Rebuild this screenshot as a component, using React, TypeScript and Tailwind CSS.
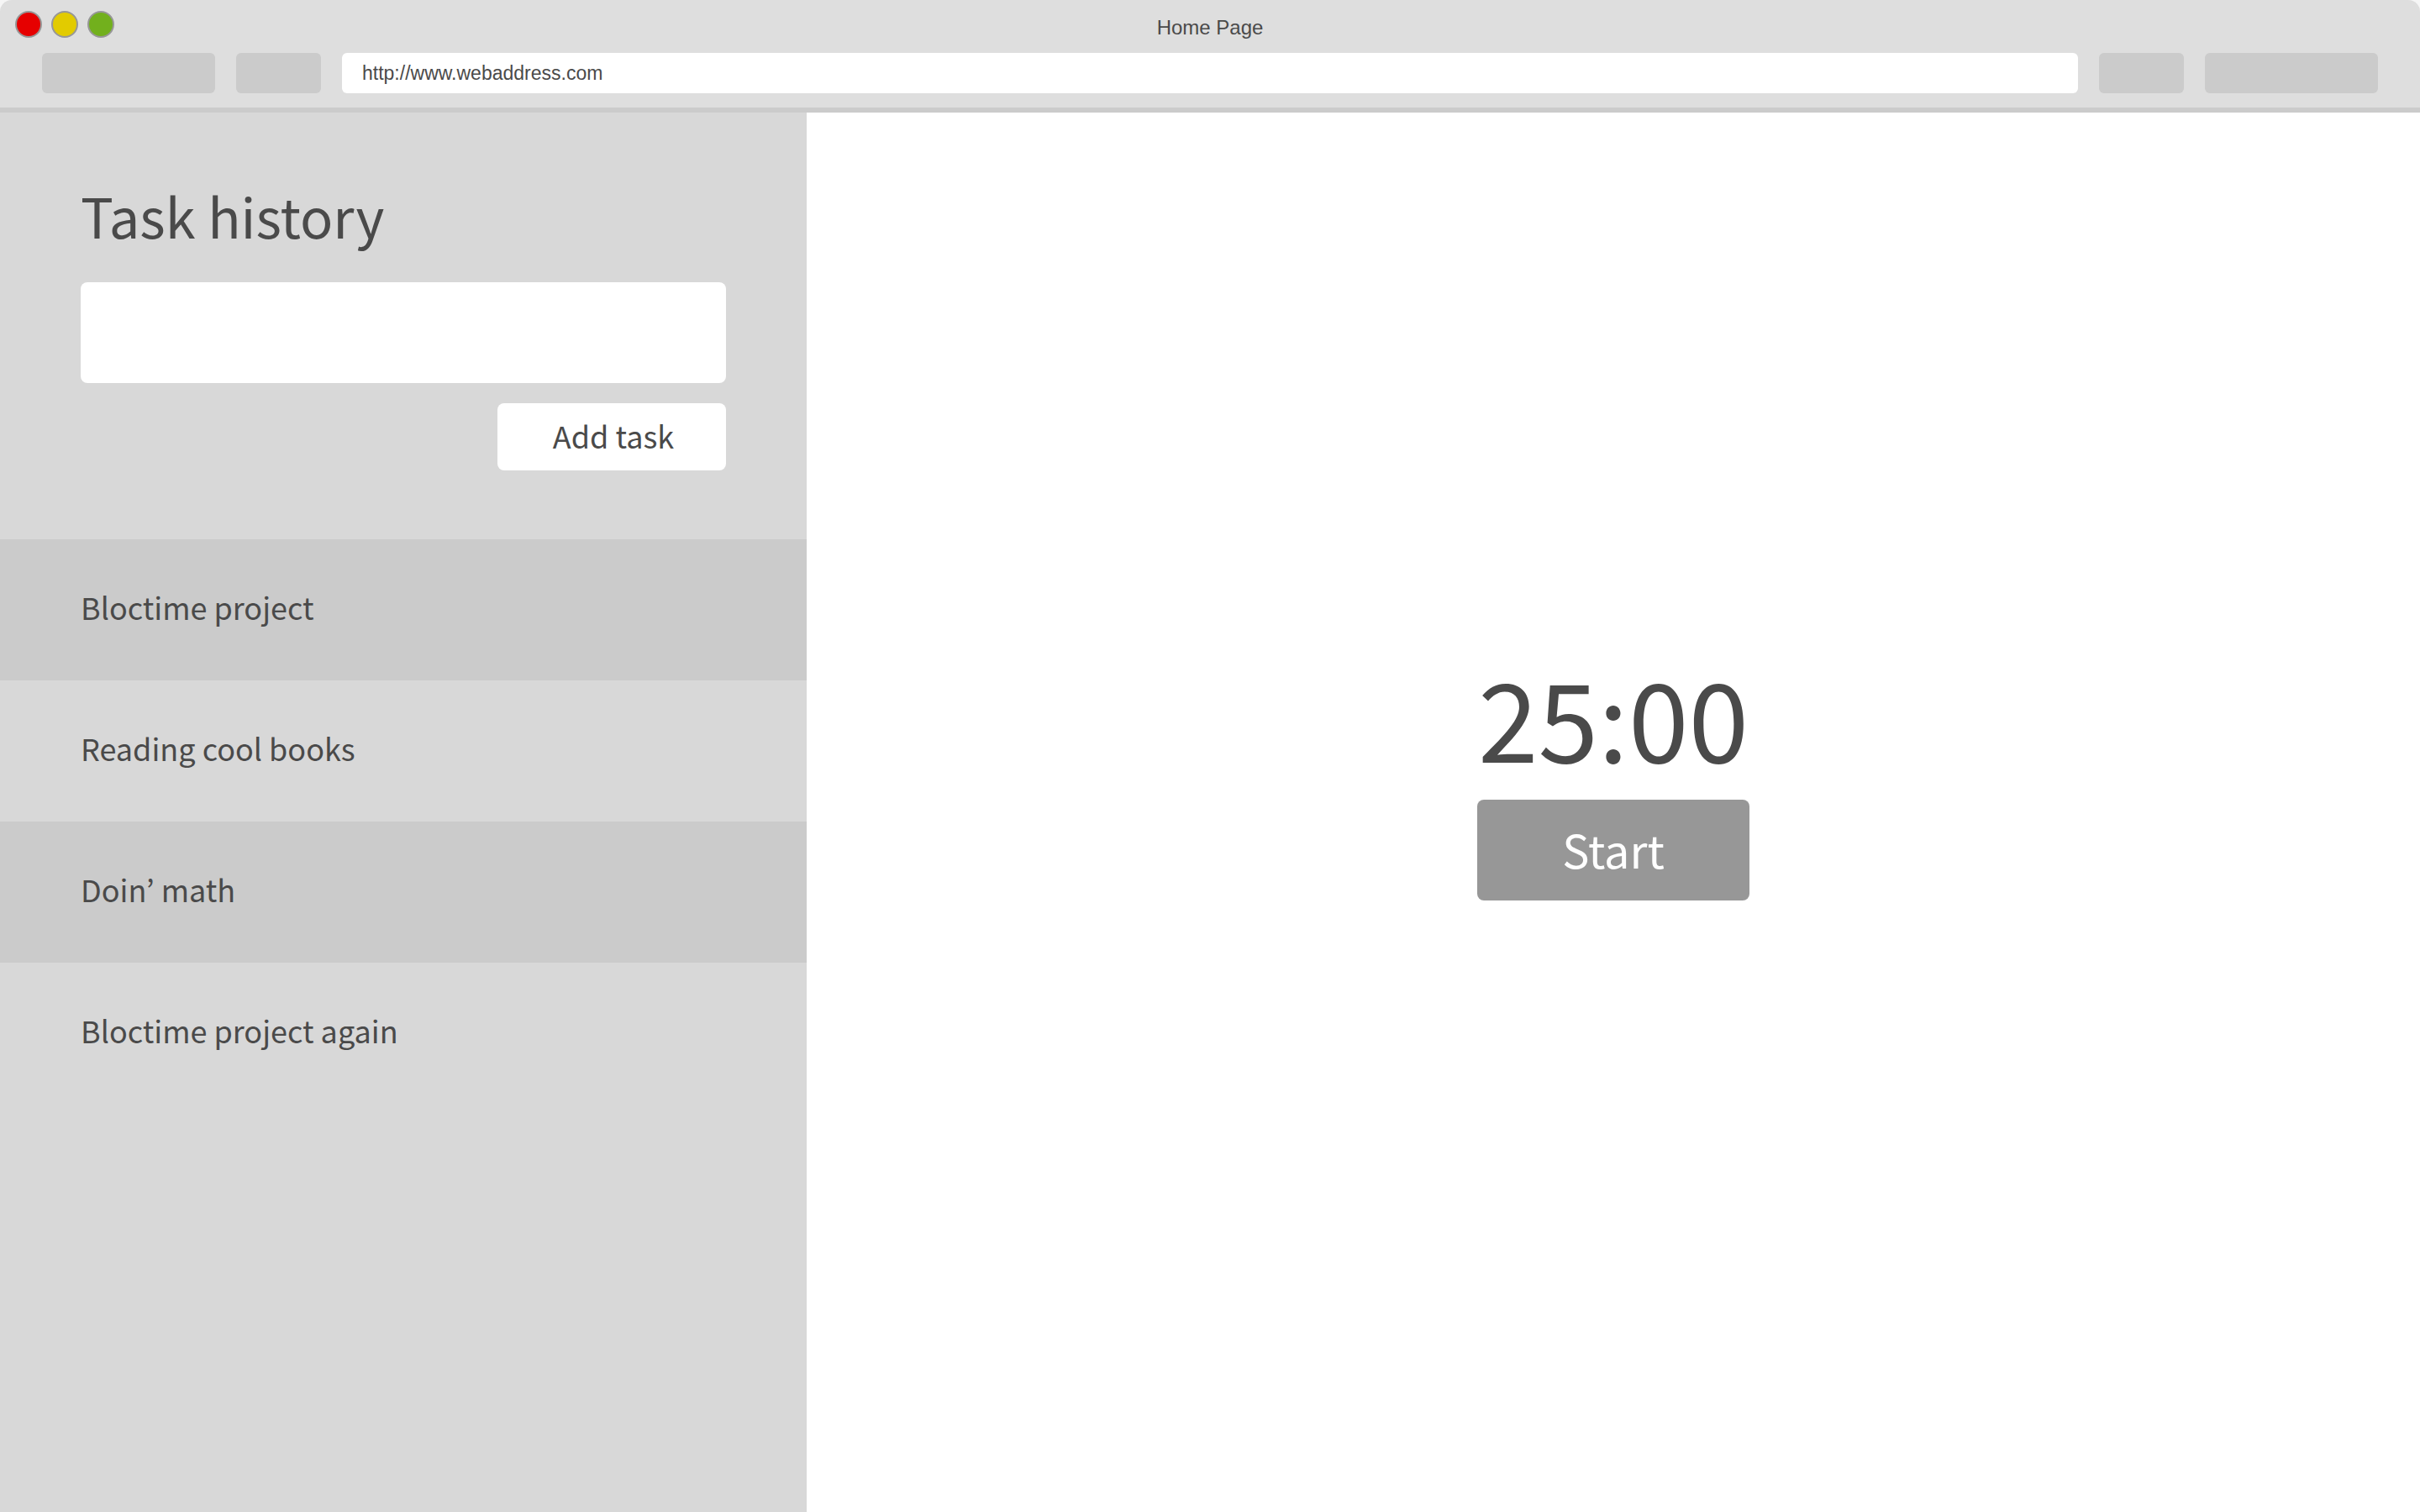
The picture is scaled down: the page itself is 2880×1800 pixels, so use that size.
import { useState } from "react";
import type { FormEvent } from "react";

const initialTasks = [
  "Bloctime project",
  "Reading cool books",
  "Doin’ math",
  "Bloctime project again",
];

const windowControls = [
  { label: "Close", color: "bg-[#e60000]" },
  { label: "Minimize", color: "bg-[#e2cb00]" },
  { label: "Zoom", color: "bg-[#72b01d]" },
];

function ToolbarButton({ label, wide = false }: { label: string; wide?: boolean }) {
  return (
    <button
      type="button"
      aria-label={label}
      className={`h-12 shrink-0 rounded-md bg-[#cbcbcb] ${wide ? "w-[206px]" : "w-[101px]"}`}
    />
  );
}

function BrowserBar() {
  return (
    <header className="rounded-t-[14px] border-b-6 border-[#cbcbcb] bg-[#dedede] pt-[13px] pb-[17px] font-['Liberation_Sans',Arial,sans-serif] text-[#4a4a4a]">
      <div className="grid grid-cols-[1fr_auto_1fr] px-[18px]">
        <div className="flex gap-[11px]">
          {windowControls.map((control) => (
            <button
              key={control.label}
              type="button"
              aria-label={control.label}
              className={`size-8 rounded-full border-2 border-[#979797] ${control.color}`}
            />
          ))}
        </div>
        <p className="text-[24px] leading-10">Home Page</p>
      </div>
      <div className="mt-[10px] flex gap-[25px] px-[50px]">
        <ToolbarButton label="Navigation" wide />
        <ToolbarButton label="Reload" />
        <input
          type="text"
          aria-label="Address"
          defaultValue="http://www.webaddress.com"
          className="h-12 min-w-0 flex-1 rounded-md bg-white px-6 text-[23px] outline-none"
        />
        <ToolbarButton label="Share" />
        <ToolbarButton label="Extensions" wide />
      </div>
    </header>
  );
}

function Sidebar() {
  const [tasks, setTasks] = useState(initialTasks);
  const [draft, setDraft] = useState("");

  const addTask = (event: FormEvent) => {
    event.preventDefault();
    if (!draft.trim()) return;
    setTasks([...tasks, draft.trim()]);
    setDraft("");
  };

  return (
    <aside className="w-1/3 bg-[#d8d8d8]">
      <form onSubmit={addTask} className="flex flex-col px-24 pt-[82px] pb-[82px]">
        <h1 className="text-[65px] leading-20">
          <label htmlFor="task">Task history</label>
        </h1>
        <input
          id="task"
          type="text"
          value={draft}
          onChange={(event) => setDraft(event.target.value)}
          className="mt-10 h-30 w-full rounded-lg bg-white px-6 text-[36px] outline-none"
        />
        <button
          type="submit"
          className="mt-6 h-20 w-[272px] self-end rounded-lg bg-white pb-1 pl-1 text-[36px] leading-12"
        >
          Add task
        </button>
      </form>
      <ul>
        {tasks.map((task, index) => (
          <li
            key={index}
            className="px-24 pt-14 pb-16 text-[36px] leading-12 odd:bg-[#cbcbcb]"
          >
            {task}
          </li>
        ))}
      </ul>
    </aside>
  );
}

function Timer() {
  return (
    <main className="flex flex-1 flex-col items-center justify-center bg-white pb-[82px]">
      <time className="text-[129px] leading-36">25:00</time>
      <button
        type="button"
        className="mt-7 h-30 w-[324px] rounded-lg bg-[#979797] pb-0.5 text-[54px] leading-16 text-white"
      >
        Start
      </button>
    </main>
  );
}

export default function App() {
  return (
    <div className="flex min-h-screen flex-col bg-[#f6f6f6] font-['Noto_Sans_CJK_KR',sans-serif] text-[#4a4a4a]">
      <BrowserBar />
      <div className="flex flex-1">
        <Sidebar />
        <Timer />
      </div>
    </div>
  );
}
